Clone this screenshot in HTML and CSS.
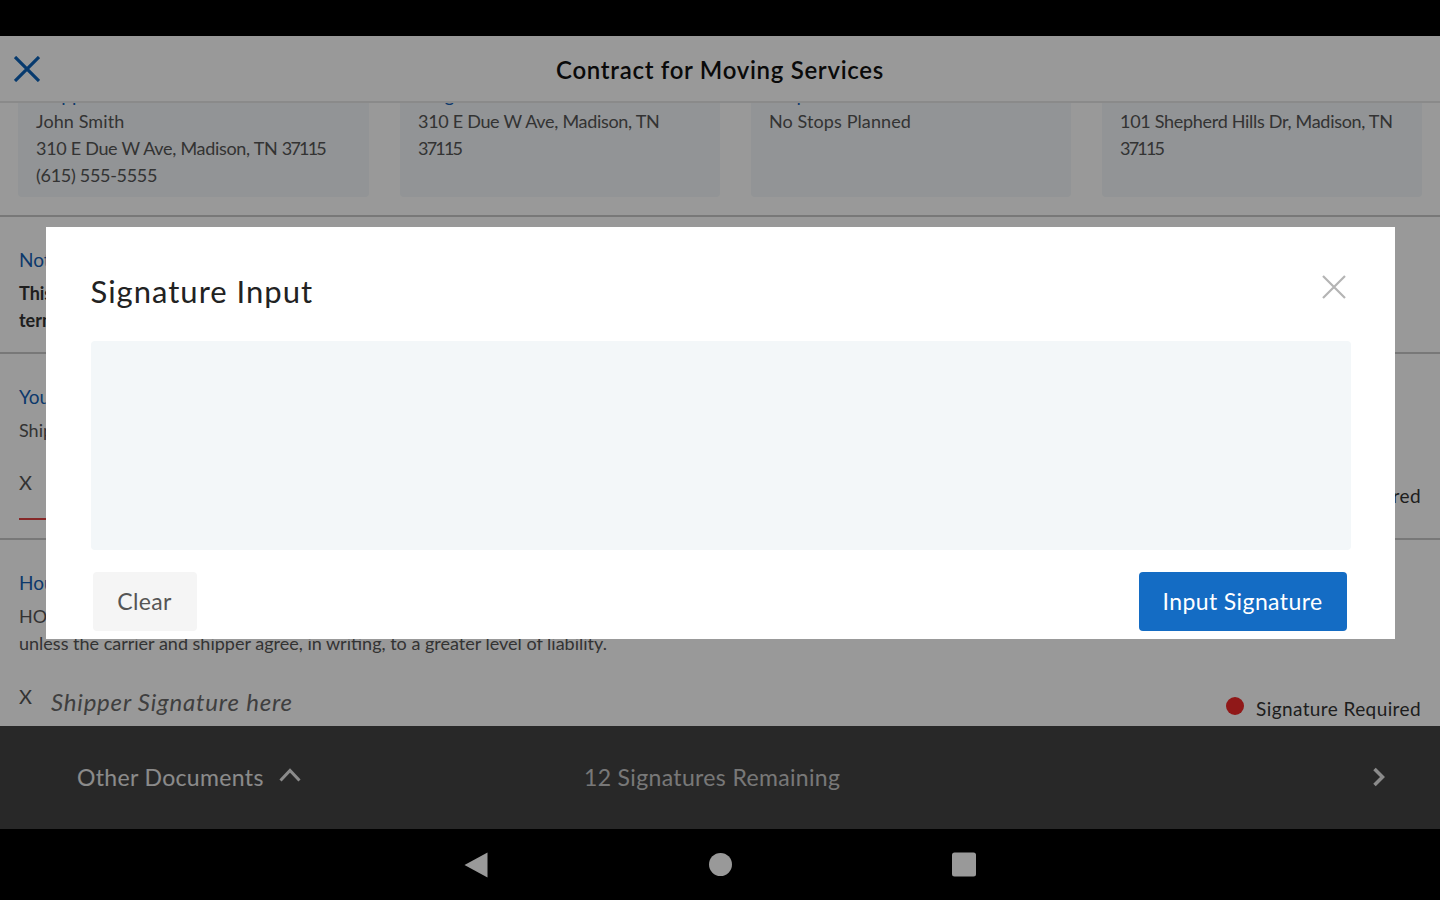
FILE: index.html
```
<!DOCTYPE html>
<html lang="en">

<head>
    <meta charset="UTF-8">
    <meta name="viewport" content="width=device-width, initial-scale=1.0">
    <title>Contract for Moving Services</title>
    <link rel="stylesheet" href="styles.css">
</head>

<body>
    <div class="screen">
        <div class="status_bar"></div>
        <header class="header">
            <svg class="header_close" viewBox="0 0 26 26">
                <path d="M1 1 L25 25 M25 1 L1 25" />
            </svg>
            <h1>Contract for Moving Services</h1>
        </header>

        <main class="content">
            <section class="cards">
                <div class="card">
                    <h2>Shipper</h2>
                    <p class="name">John Smith</p>
                    <p>310 E Due W Ave, Madison, TN <span class="zip">37115</span></p>
                    <p>(615) 555-5555</p>
                </div>
                <div class="card">
                    <h2>Origin</h2>
                    <p>310 E Due W Ave, Madison, TN<br><span class="zip">37115</span></p>
                </div>
                <div class="card">
                    <h2>Stops</h2>
                    <p class="name">No Stops Planned</p>
                </div>
                <div class="card">
                    <h2>Destination</h2>
                    <p>101 Shepherd Hills Dr, Madison, TN<br><span class="zip">37115</span></p>
                </div>
            </section>

            <section class="section notice">
                <h2>Notice</h2>
                <p>This<br>terms</p>
            </section>

            <section class="section rights">
                <h2>Your</h2>
                <p>Shipper</p>
                <div class="sign_row">
                    <div class="sign_line"><span class="mark">X</span></div>
                    <span class="required">Signature Required</span>
                </div>
            </section>

            <section class="section goods">
                <h2>House</h2>
                <p>HOUSE<br><span class="liability">unless the carrier and shipper agree, in writing, to a greater level of liability.</span></p>
                <div class="sign_row">
                    <span class="mark">X</span>
                    <span class="placeholder">Shipper Signature here</span>
                    <span class="dot"></span>
                    <span class="required">Signature Required</span>
                </div>
            </section>
        </main>

        <footer class="footer">
            <div class="documents">
                <span>Other Documents</span>
                <svg class="up" viewBox="0 0 22 14">
                    <path d="M1.5 12.5 L11 2.5 L20.5 12.5" />
                </svg>
            </div>
            <div class="remaining">12 Signatures Remaining</div>
            <svg class="next" viewBox="0 0 14 20">
                <path d="M2.5 2 L10.5 10 L2.5 18" />
            </svg>
        </footer>

        <nav class="nav_bar">
            <svg viewBox="0 0 24 26"><path d="M23.5 0.5 V25.5 L0.5 13 Z" /></svg>
            <svg viewBox="0 0 24 26"><circle cx="12.5" cy="12.5" r="11.5" /></svg>
            <svg viewBox="0 0 24 26"><rect x="0" y="0.5" width="24" height="24" rx="2.5" /></svg>
        </nav>
    </div>

    <div class="overlay">
        <div class="modal">
            <div class="modal_header">
                <h2>Signature Input</h2>
                <svg class="modal_close" viewBox="0 0 24 24">
                    <path d="M1 1 L23 23 M23 1 L1 23" />
                </svg>
            </div>
            <div class="signature_pad"></div>
            <div class="buttons">
                <button class="btn_clear">Clear</button>
                <button class="btn_input">Input Signature</button>
            </div>
        </div>
    </div>
</body>

</html>
```
FILE: styles.css
```
* {
    box-sizing: border-box;
}

body {
    margin: 0;
    font-family: Lato, "Open Sans", sans-serif;
    background-color: #000;
    overflow: hidden;
}

h1,
h2,
p {
    margin: 0;
}

svg {
    display: block;
    fill: none;
}

.screen {
    width: 100%;
    height: 900px;
    display: flex;
    flex-direction: column;
}

.status_bar {
    height: 36px;
    flex: none;
    background-color: #000;
}

.header {
    height: 67px;
    flex: none;
    display: grid;
    grid-template-columns: 40px 1fr 40px;
    align-items: center;
    padding: 0 14px;
    background-color: #fff;
    border-bottom: 2px solid #e6e6e6;
}

.header_close {
    width: 26px;
    height: 26px;
    stroke: #0c62b8;
    stroke-width: 3.2;
}

.header h1 {
    text-align: center;
    font-size: 24px;
    font-weight: 600;
    line-height: 28px;
    letter-spacing: 0.7px;
    padding-top: 2px;
    color: #111;
}

.content {
    flex: 1;
    min-height: 0;
    overflow: hidden;
    background-color: #fff;
    font-size: 18px;
    line-height: 27px;
    color: #555;
}

.content h2 {
    font-size: 19px;
    font-weight: normal;
    line-height: 27px;
    color: #1560b4;
}

/* the list is scrolled, so the card headings sit under the header */
.cards {
    display: grid;
    grid-template-columns: 351px 320px 320px 320px;
    gap: 31px;
    margin-top: -31px;
    padding: 0 18px 18px;
    border-bottom: 2px solid #c8c8c8;
}

.card {
    height: 125px;
    padding: 9px 18px 0;
    border-radius: 4px;
    background-color: #f3f7fa;
}

.card p {
    white-space: nowrap;
    letter-spacing: -0.3px;
}

.card .name {
    letter-spacing: 0.1px;
}

.card .zip {
    letter-spacing: -1.8px;
}

.section {
    padding: 0 19px;
    border-bottom: 2px solid #c8c8c8;
}

.section h2 {
    margin-bottom: 7px;
}

.notice {
    height: 137px;
    padding-top: 29px;
}

.notice p {
    font-weight: bold;
    color: #333;
}

.rights {
    height: 186px;
    padding-top: 29px;
}

.rights .sign_row {
    margin-top: 15px;
}

.sign_line {
    width: 1100px;
    height: 61px;
    padding-top: 10px;
    border-bottom: 2px solid #e04444;
}

.rights .required {
    padding-top: 23px;
}

.goods {
    padding-top: 29px;
    border-bottom: none;
}

.sign_row {
    display: flex;
    align-items: flex-start;
}

.goods .sign_row {
    margin-top: 26px;
}

.mark {
    width: 32px;
    font-size: 20px;
}

.required {
    margin-left: auto;
    padding-top: 12px;
    font-size: 19px;
    letter-spacing: 0.4px;
    color: #333;
}

.placeholder {
    padding-top: 5px;
    font-size: 24px;
    font-style: italic;
    letter-spacing: 0.8px;
    color: #6a6a6a;
}

.dot {
    width: 18px;
    height: 18px;
    margin: 14px 12px 0 auto;
    border-radius: 50%;
    background-color: #f02828;
}

.dot + .required {
    margin-left: 0;
}

.footer {
    height: 103px;
    flex: none;
    display: grid;
    grid-template-columns: 507px 1fr auto;
    align-items: center;
    padding: 0 54px 2px 77px;
    font-size: 23px;
    letter-spacing: 0.35px;
    color: #e8e8e8;
    background-color: #444;
}

.documents {
    display: flex;
    align-items: center;
    gap: 15px;
}

.footer .up {
    width: 22px;
    height: 14px;
    margin-top: -3px;
    stroke: #e8e8e8;
    stroke-width: 3;
}

.remaining {
    white-space: nowrap;
    color: #c8c8c8;
}

.footer .next {
    width: 14px;
    height: 20px;
    stroke: #e8e8e8;
    stroke-width: 3.5;
}

.nav_bar {
    height: 71px;
    flex: none;
    display: flex;
    justify-content: center;
    gap: 220px;
    background-color: #000;
}

.nav_bar svg {
    width: 24px;
    height: 26px;
    margin-top: 23px;
    fill: #fff;
}

.overlay {
    position: fixed;
    inset: 0;
    display: flex;
    justify-content: center;
    align-items: flex-start;
    padding-top: 227px;
    background-color: rgba(0, 0, 0, 0.4);
}

.modal {
    width: 1349px;
    height: 412px;
    padding: 44px 44px 0 45px;
    background-color: #fff;
}

.modal_header {
    height: 70px;
    display: flex;
    justify-content: space-between;
    align-items: flex-start;
}

.modal_header h2 {
    font-size: 31px;
    font-weight: normal;
    line-height: 40px;
    letter-spacing: 1px;
    color: #222;
}

.modal_close {
    width: 24px;
    height: 24px;
    margin: 4px 5px 0 0;
    stroke: #b4b4b4;
    stroke-width: 2.2;
}

.signature_pad {
    height: 209px;
    border-radius: 4px;
    background-color: #f3f7f9;
}

.buttons {
    display: flex;
    justify-content: space-between;
    padding: 22px 4px 0 2px;
}

.buttons button {
    height: 59px;
    padding: 0 0 2px;
    border: none;
    border-radius: 4px;
    font-family: inherit;
    font-size: 23px;
    letter-spacing: 0.4px;
    cursor: pointer;
}

.btn_clear {
    width: 104px;
    color: #555;
    background-color: #f5f5f5;
}

.btn_input {
    width: 208px;
    color: #fff;
    background-color: #146cc4;
}
```
